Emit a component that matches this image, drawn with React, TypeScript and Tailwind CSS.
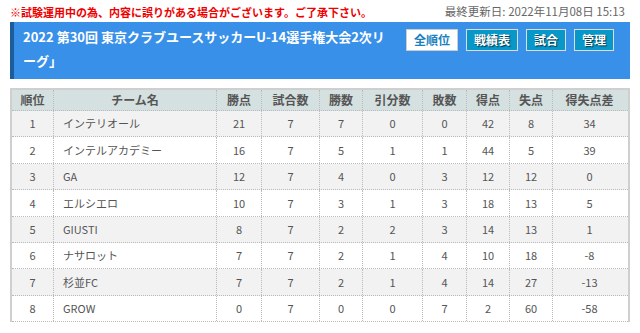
import React from "react";

const rows = [
  ["1", "インテリオール", "21", "7", "7", "0", "0", "42", "8", "34"],
  ["2", "インテルアカデミー", "16", "7", "5", "1", "1", "44", "5", "39"],
  ["3", "GA", "12", "7", "4", "0", "3", "12", "12", "0"],
  ["4", "エルシエロ", "10", "7", "3", "1", "3", "18", "13", "5"],
  ["5", "GIUSTI", "8", "7", "2", "2", "3", "14", "13", "1"],
  ["6", "ナサロット", "7", "7", "2", "1", "4", "10", "18", "-8"],
  ["7", "杉並FC", "7", "7", "2", "1", "4", "14", "27", "-13"],
  ["8", "GROW", "0", "7", "0", "0", "7", "2", "60", "-58"],
];
const heads = ["順位", "チーム名", "勝点", "試合数", "勝数", "引分数", "敗数", "得点", "失点", "得失点差"];
const widths = [44, 163, 45, 58, 43, 60, 44, 43, 43, 75];

export default function App() {
  const font = { fontFamily: '"Noto Sans CJK JP", "Noto Sans", sans-serif' };
  return (
    <div className="w-[640px] h-[333px] bg-white overflow-hidden" style={font}>
      <div className="flex justify-between items-center h-[22px] pl-[10px] pr-[15px] pt-[2px]">
        <span className="text-[11px] font-bold text-[#ee0000] leading-none">※試験運用中の為、内容に誤りがある場合がございます。ご了承下さい。</span>
        <span className="text-[11.5px] text-[#666] leading-none">最終更新日: 2022年11月08日 15:13</span>
      </div>
      <div className="ml-[10px] w-[620px] h-[57px] bg-[#3890e8] border-l-4 border-[#1d5c9a] flex justify-between items-start">
        <div className="text-white font-bold text-[13px] leading-[24px] pl-[9px] pt-[3px] whitespace-nowrap">
          2022 第30回 東京クラブユースサッカーU-14選手権大会2次リ
          <br />
          ーグ」
        </div>
        <div className="flex gap-[8px] pt-[7px] pr-[16px]">
          <div className="w-[52px] h-[22px] bg-white border border-[#ccc] text-[#1a7fc0] text-[12px] font-bold flex items-center justify-center">全順位</div>
          <div className="w-[52px] h-[22px] bg-[#0797c9] border border-[#ddd] text-white text-[12px] font-bold flex items-center justify-center [text-shadow:1px_1px_1px_#034]">戦績表</div>
          <div className="w-[40px] h-[22px] bg-[#0797c9] border border-[#ddd] text-white text-[12px] font-bold flex items-center justify-center [text-shadow:1px_1px_1px_#034]">試合</div>
          <div className="w-[40px] h-[22px] bg-[#0797c9] border border-[#ddd] text-white text-[12px] font-bold flex items-center justify-center [text-shadow:1px_1px_1px_#034]">管理</div>
        </div>
      </div>
      <div className="ml-[10px] mt-[9px] w-[620px] border-t-2 border-l-2 border-r-2 border-[#cfcfcf]">
        <div className="flex h-[21px] bg-[#d5e0e0] border-b border-dotted border-[#bbb]">
          {heads.map((h, i) => (
            <div
              key={i}
              className={`flex items-center justify-center text-[12px] font-bold text-[#555] ${i < 9 ? "border-r border-dotted border-[#bbb]" : ""}`}
              style={{ width: i === 0 ? widths[0] - 2 : i === 9 ? widths[9] - 2 : widths[i] }}
            >
              {h}
            </div>
          ))}
        </div>
        {rows.map((r, ri) => (
          <div key={ri} className={`flex h-[26.4px] border-b border-dotted border-[#bbb] ${ri % 2 === 0 ? "bg-[#f2f2f2]" : "bg-white"}`}>
            {r.map((c, i) => (
              <div
                key={i}
                className={`flex items-center text-[11px] text-[#555] ${i === 1 ? "justify-start pl-[9px]" : "justify-center"} ${i < 9 ? "border-r border-dotted border-[#bbb]" : ""}`}
                style={{ width: i === 0 ? widths[0] - 2 : i === 9 ? widths[9] - 2 : widths[i] }}
              >
                {c}
              </div>
            ))}
          </div>
        ))}
      </div>
    </div>
  );
}
